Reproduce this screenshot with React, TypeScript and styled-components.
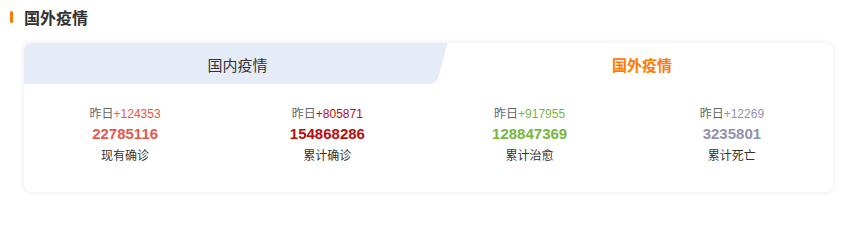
import styled, { createGlobalStyle } from "styled-components";

const GlobalStyle = createGlobalStyle`
  html, body {
    margin: 0;
    padding: 0;
    background: #fff;
    font-family: "Liberation Sans", "Noto Sans CJK SC", sans-serif;
  }
`;

const Page = styled.div`
  width: 851px;
  height: 204px;
  padding: 8px 18px 0 10px;
  box-sizing: border-box;
`;

const Heading = styled.div`
  display: flex;
  align-items: center;
  height: 18px;
  gap: 11px;
  font-size: 16px;
  font-weight: 700;
  color: #333;
`;

const Marker = styled.span`
  width: 3px;
  height: 12px;
  border-radius: 2px;
  background: #ff7a00;
`;

const Card = styled.div`
  margin: 17px 0 0 14px;
  border-radius: 8px;
  background: #fff;
  box-shadow: 0 0 6px rgba(0, 0, 0, 0.09);
  overflow: hidden;
`;

const TabBar = styled.div`
  display: flex;
  height: 41px;
`;

const Tab = styled.div<{ $active?: boolean }>`
  position: relative;
  display: flex;
  align-items: center;
  justify-content: center;
  font-size: 15px;
  padding-top: 1px;
  ${(p) =>
    p.$active
      ? `flex: 1; color: #ff7a00; font-weight: 700;`
      : `width: 427px; color: #333;`}

  ${(p) =>
    !p.$active &&
    `
    &::before {
      content: "";
      position: absolute;
      left: 0;
      top: 0;
      bottom: 0;
      right: 30px;
      background: #e5ecf7;
    }
    &::after {
      content: "";
      position: absolute;
      top: 0;
      bottom: 0;
      right: 9px;
      width: 40px;
      background: #e5ecf7;
      border-radius: 0 0 7px 0;
      transform: skewX(-15deg);
    }
  `}
`;

const TabLabel = styled.span`
  position: relative;
  z-index: 1;
`;

const Stats = styled.div`
  display: grid;
  grid-template-columns: repeat(4, 1fr);
  padding: 20px 0 25px;
`;

const Stat = styled.div`
  display: flex;
  flex-direction: column;
  align-items: center;
`;

const Yesterday = styled.div`
  font-size: 12px;
  line-height: 20px;
  color: #666;
`;

const Delta = styled.span<{ $color: string }>`
  color: ${(p) => p.$color};
`;

const Total = styled.div<{ $color: string }>`
  font-size: 15px;
  font-weight: 700;
  line-height: 20px;
  color: ${(p) => p.$color};
`;

const Label = styled.div`
  font-size: 12px;
  line-height: 22px;
  margin-top: 1px;
  color: #333;
`;

const stats = [
  { delta: "+124353", total: "22785116", label: "现有确诊", color: "#e8574d" },
  { delta: "+805871", total: "154868286", label: "累计确诊", color: "#b80e0e" },
  { delta: "+917955", total: "128847369", label: "累计治愈", color: "#78b63e" },
  { delta: "+12269", total: "3235801", label: "累计死亡", color: "#9192b0" },
];

function App() {
  return (
    <>
      <GlobalStyle />
      <Page>
        <Heading>
          <Marker />
          国外疫情
        </Heading>
        <Card>
          <TabBar>
            <Tab>
              <TabLabel>国内疫情</TabLabel>
            </Tab>
            <Tab $active>
              <TabLabel>国外疫情</TabLabel>
            </Tab>
          </TabBar>
          <Stats>
            {stats.map((s) => (
              <Stat key={s.label}>
                <Yesterday>
                  昨日<Delta $color={s.color}>{s.delta}</Delta>
                </Yesterday>
                <Total $color={s.color}>{s.total}</Total>
                <Label>{s.label}</Label>
              </Stat>
            ))}
          </Stats>
        </Card>
      </Page>
    </>
  );
}

export default App;
